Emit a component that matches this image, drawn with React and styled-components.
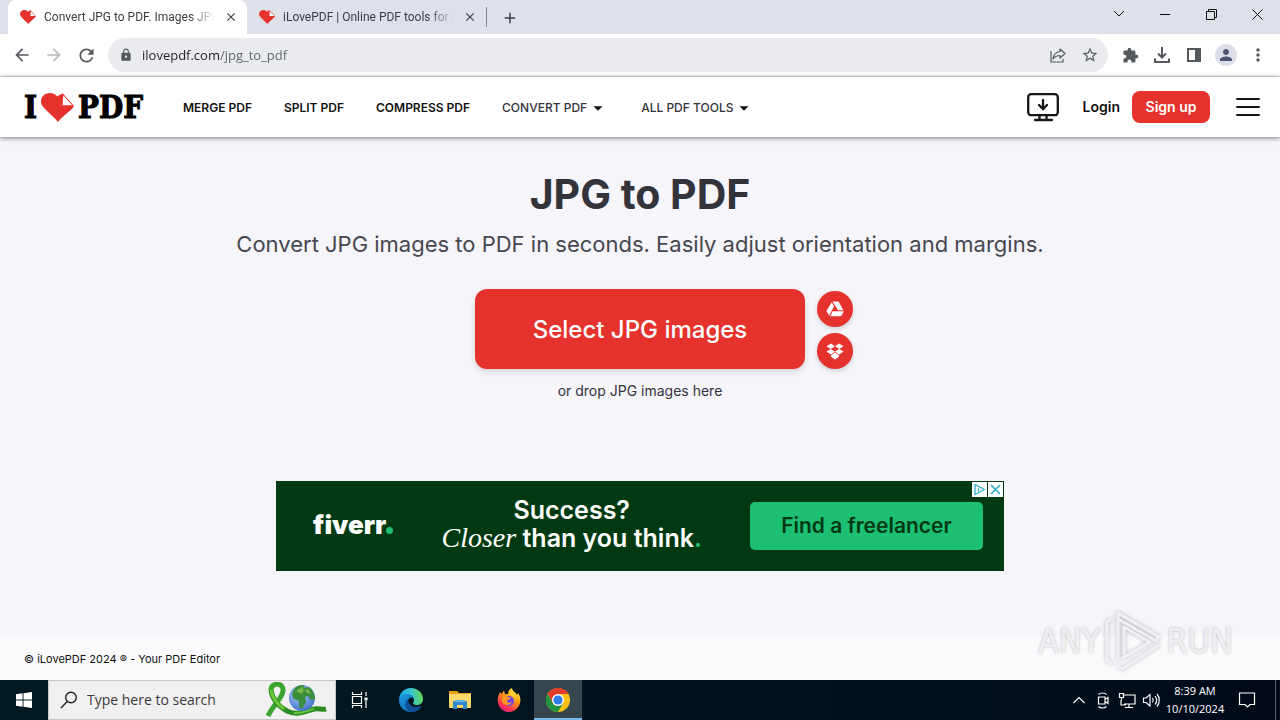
import React, { useState } from 'react';
import styled, { createGlobalStyle } from 'styled-components';
import {
    MdArrowBack,
    MdArrowForward,
    MdRefresh,
    MdLock,
    MdStarOutline,
    MdExtension,
    MdMoreVert,
    MdPerson,
    MdClose,
    MdAdd,
    MdArrowDropDown
} from 'react-icons/md';

const GlobalStyle = createGlobalStyle`
    * {
        box-sizing: border-box;
    }

    body {
        margin: 0;
        font-family: Inter, 'Liberation Sans', sans-serif;
        color: #33333b;
    }

    button, input {
        font: inherit;
        color: inherit;
        border: none;
        background: none;
        padding: 0;
        margin: 0;
        outline: none;
    }

    a {
        color: inherit;
        text-decoration: none;
    }

    svg {
        display: block;
        flex-shrink: 0;
    }
`;

const Desktop = styled.div`
    min-height: 100vh;
    display: flex;
    flex-direction: column;
`;

/* ---------- Browser ---------- */

const TabStrip = styled.div`
    display: flex;
    height: 34px;
    padding-left: 8px;
    background-color: #dee1e8;
    font-family: Roboto, 'Noto Sans', sans-serif;
    font-size: 12px;
    color: #3c4043;
`;

const Tab = styled.div`
    display: flex;
    align-items: center;
    gap: 8px;
    width: 239px;
    padding: 0 8px 0 12px;
    border-radius: 8px 8px 0 0;
    background-color: ${({ $active }) => $active ? '#ffffff' : 'transparent'};
`;

const TabTitle = styled.span`
    flex: 1;
    min-width: 0;
    overflow: hidden;
    white-space: nowrap;
    mask-image: linear-gradient(to right, #000 85%, transparent);
`;

const TabButton = styled.button`
    display: grid;
    place-items: center;
    width: 16px;
    height: 16px;
`;

const TabDivider = styled.div`
    width: 1px;
    height: 20px;
    margin: 7px 14px 0 0;
    background-color: #80868b;
`;

const NewTab = styled(TabButton)`
    align-self: center;
`;

const WindowControls = styled.div`
    display: flex;
    margin-left: auto;
`;

const WindowButton = styled.button`
    display: grid;
    place-items: center;
    width: 46px;
    height: 28px;
    color: #111;
`;

const Toolbar = styled.div`
    display: flex;
    align-items: center;
    height: 43px;
    padding: 0 6px;
    background-color: #ffffff;
    border-bottom: 1px solid #dadce0;
    color: #55585d;
`;

const ToolButton = styled.button`
    display: grid;
    place-items: center;
    width: 32px;
    height: 32px;
    color: ${({ $muted }) => $muted ? '#bababa' : 'inherit'};
`;

const Omnibox = styled.label`
    display: flex;
    align-items: center;
    flex: 1;
    height: 34px;
    margin: 0 6px;
    padding: 0 2px 0 11px;
    border-radius: 17px;
    background-color: #e9ebee;
`;

// The host is drawn darker than the path
const UrlInput = styled.input`
    flex: 1;
    margin-left: 9px;
    font-family: 'Open Sans', 'Noto Sans', sans-serif;
    font-size: 13px;
    line-height: 20px;
    background-image: linear-gradient(to right, #202124 78px, #5f6368 78px);
    background-clip: text;
    -webkit-text-fill-color: transparent;
`;

const Avatar = styled.span`
    display: grid;
    place-items: center;
    width: 22px;
    height: 22px;
    border-radius: 50%;
    background-color: #dcdfe8;
    color: #4d5370;
`;

/* ---------- Site ---------- */

const SiteHeader = styled.header`
    position: relative;
    display: flex;
    align-items: center;
    height: 60px;
    padding: 0 20px 0 24px;
    background-color: #ffffff;
    box-shadow: 0 1px 5px rgba(0, 0, 20, 0.5);
`;

const Logo = styled.a`
    display: flex;
    align-items: center;
    gap: 4px;
    font-family: 'DejaVu Serif Condensed', 'DejaVu Serif', serif;
    font-size: 31px;
    font-weight: 700;
    line-height: 32px;
    color: #000;
    -webkit-text-stroke: 1px #000;
`;

const Nav = styled.nav`
    display: flex;
    align-items: center;
    gap: 32px;
    margin-left: 40px;
    padding-top: 2px;
    font-size: 12px;
    line-height: 16px;
    white-space: nowrap;
`;

const NavLink = styled.a`
    display: flex;
    align-items: center;
    font-weight: ${({ $menu }) => $menu ? 500 : 600};
    color: ${({ $menu }) => $menu ? '#33333b' : '#111'};

    svg {
        color: #111;
    }
`;

const Account = styled.div`
    display: flex;
    align-items: center;
    margin-left: auto;
    font-size: 14px;
    font-weight: 600;
    line-height: 20px;
    color: #111;
`;

const LoginLink = styled.a`
    margin: 0 12px 0 24px;
`;

const SignUp = styled.a`
    width: 78px;
    padding: 6px 0;
    margin-right: 26px;
    border-radius: 8px;
    background-color: #e5322d;
    color: #fff;
    text-align: center;
`;

const Main = styled.main`
    flex: 1;
    display: flex;
    flex-direction: column;
    align-items: center;
    padding-top: 32px;
    background-color: #f5f5fa;
`;

const Title = styled.h1`
    margin: 0;
    font-size: 41px;
    font-weight: 700;
    line-height: 50px;
`;

const Subtitle = styled.p`
    margin: 9px 0 0;
    font-size: 22px;
    line-height: 32px;
    color: #47474f;
`;

const Uploader = styled.div`
    display: grid;
    grid-template-columns: 1fr 330px 1fr;
    align-items: center;
    gap: 12px;
    align-self: stretch;
    margin-top: 29px;
`;

const SelectButton = styled.button`
    grid-column: 2;
    height: 80px;
    border-radius: 12px;
    background-color: #e5322d;
    box-shadow: 0 3px 6px rgba(0, 0, 0, 0.14);
    color: #fff;
    font-size: 24px;
    font-weight: 500;
`;

const Sources = styled.div`
    display: flex;
    flex-direction: column;
    gap: 6px;
    padding-top: 2px;
`;

const SourceButton = styled.button`
    display: grid;
    place-items: center;
    width: 36px;
    height: 36px;
    border-radius: 50%;
    background-color: #e5322d;
    box-shadow: 0 2px 5px rgba(0, 0, 0, 0.16);
    color: #fff;
`;

const DropHint = styled.p`
    margin: 12px 0 0;
    font-size: 14px;
    line-height: 20px;
`;

const Banner = styled.section`
    position: relative;
    display: flex;
    align-items: center;
    justify-content: space-between;
    width: 728px;
    max-width: 100%;
    height: 90px;
    margin: 80px 0 24px;
    padding: 0 21px 0 37px;
    background-color: #003912;
    color: #fff;
`;

const Fiverr = styled.div`
    display: flex;
    align-items: baseline;
    padding-bottom: 2px;
    font-size: 26px;
    font-weight: 900;
    line-height: 32px;
`;

const Dot = styled.span`
    width: 7px;
    height: 7px;
    border-radius: 50%;
    background-color: #1dbf73;
`;

const Slogan = styled.p`
    margin: 0;
    padding-bottom: 4px;
    font-size: 25px;
    font-weight: 600;
    line-height: 28px;
    text-align: center;

    em {
        font-family: 'Liberation Serif', serif;
        font-size: 28px;
        font-weight: 400;
        line-height: 20px;
    }

    span {
        color: #1dbf73;
    }
`;

const BannerLink = styled.a`
    width: 233px;
    border-radius: 5px;
    background-color: #1dbf73;
    color: #003912;
    font-size: 21px;
    font-weight: 600;
    line-height: 48px;
    text-align: center;
`;

const AdMarks = styled.div`
    position: absolute;
    top: 1px;
    right: 1px;
    display: flex;
    gap: 1px;
`;

const AdMark = styled.button`
    display: grid;
    place-items: center;
    width: 15px;
    height: 15px;
    background-color: #fff;
`;

const SiteFooter = styled.footer`
    position: relative;
    padding: 15px 24px 13px;
    background-color: #fbfbfe;
    font-size: 11px;
    line-height: 16px;
    color: #111;
`;

const Watermark = styled.div`
    position: absolute;
    right: 47px;
    bottom: 7px;
    display: flex;
    align-items: center;
    gap: 4px;
    font-family: 'Liberation Sans Narrow', 'DejaVu Sans Condensed', sans-serif;
    font-size: 34px;
    line-height: 64px;
    color: rgba(244, 244, 247, 0.9);
    text-shadow: 0 0 3px rgba(90, 90, 90, 0.4);

    svg {
        filter: drop-shadow(0 0 2px rgba(90, 90, 90, 0.4));
    }
`;

/* ---------- Taskbar ---------- */

const Taskbar = styled.div`
    display: flex;
    height: 40px;
    background-image: linear-gradient(to right, #021a23, #02131e 60%, #020a19);
    color: #fff;
    font-family: 'Open Sans', 'Noto Sans', sans-serif;
`;

const TaskButton = styled.button`
    display: grid;
    place-items: center;
    width: ${({ $width }) => $width || 48}px;
    height: 40px;
    background-color: ${({ $active }) => $active ? '#36464f' : 'transparent'};
    box-shadow: ${({ $active }) => $active ? 'inset 0 -2px #76b9ed' : 'none'};
`;

const SearchBox = styled.label`
    display: flex;
    align-items: center;
    width: 288px;
    padding: 0 8px 0 11px;
    border: 1px solid #c8c8c8;
    background-color: #f0f0f0;
    color: #222;
`;

const SearchInput = styled.input`
    flex: 1;
    min-width: 0;
    margin-left: 9px;
    font-size: 14px;
    line-height: 20px;

    &::placeholder {
        color: #3a3a3a;
        opacity: 1;
    }
`;

const Pinned = styled.div`
    display: flex;
    gap: 1px;
    margin-left: 3px;
`;

const Tray = styled.div`
    display: flex;
    margin-left: auto;
`;

const Clock = styled.div`
    width: 64px;
    padding-top: 2px;
    font-size: 11px;
    line-height: 18px;
    text-align: center;
`;

const ShowDesktop = styled.button`
    width: 5px;
    margin-left: 8px;
    border-left: 1px solid #5a626c;
`;

/* ---------- Drawings ---------- */

const Heart = ({ width, height }) => (
    <svg width={width} height={height} viewBox="0 0 33 29">
        <path
            d="M17 29C14 25 9 21 5 17 1 13 0 11 0 8.500 0 3.500 4 0 9 0c3 0 5.500 1.200 7.500 3.500C18 2 20 1 22 .5L33 13c-1.500 3-5 5.500-8.500 8.500-3 2.500-6 5-7.500 7.500z"
            fill="#e5322d"
        />
        <path d="M22.300 2.200L31.200 12.300H21.500z" fill="#fff" />
    </svg>
);

const DriveIcon = () => (
    <svg width="18" height="16" viewBox="0 0 18 16" fill="currentColor">
        <path d="M5.700 1.200L8 5.200 3.300 14.500 1 11.300c-.6-1-.6-1.400 0-2.400zM6.500.5h5.200c.6 0 1 .3 1.300.8L17.300 9.300h-5.200zM6.700 10.200h10.600c.2.800 0 1.300-.3 1.800l-1.300 2.300c-.4.700-.8.900-1.500.9H4.200z" />
    </svg>
);

const DropboxIcon = () => (
    <svg width="18" height="17" viewBox="0 0 18 17" fill="currentColor">
        <path d="M5 .5l4 2.700-4.300 2.700L.5 3.200zM13 .5l4.500 2.700-4.200 2.700L9 3.200zM.5 8.600l4.200-2.700L9 8.600l-4 2.800zM13.300 5.900l4.200 2.700-4.500 2.800-4-2.800zM5 12.300l4-2.700 4 2.700v1.400l-4 2.800-4-2.800z" />
    </svg>
);

const MonitorIcon = () => (
    <svg width="32" height="30" viewBox="0 0 32 30" fill="none" stroke="#161616" strokeWidth="2.300">
        <rect x="1.200" y="2.200" width="29.600" height="21" rx="3" />
        <path d="M12.500 23v4.500M19.500 23v4.500M8 28h17M16 8v9M12 13l4 4 4-4" strokeLinecap="round" />
    </svg>
);

const ShareIcon = () => (
    <svg width="18" height="16" viewBox="0 0 18 16" fill="none" stroke="currentColor" strokeWidth="1.2">
        <path d="M2 4v11h12v-3" />
        <path d="M11 2l5 4.500-5 4.500V8.500C8 8.500 6 9.500 4 12c.5-4 3-7 7-7.500z" strokeLinejoin="round" />
    </svg>
);

const DownloadIcon = () => (
    <svg width="18" height="18" viewBox="0 0 18 18" fill="none" stroke="currentColor" strokeWidth="2">
        <path d="M9 1v10M5 7.500l4 4 4-4M2 12.500V16h14v-3.500" />
    </svg>
);

const PanelIcon = () => (
    <svg width="14" height="14" viewBox="0 0 14 14" fill="currentColor">
        <path fillRule="evenodd" d="M0 0h14v14H0zM2 2v10h6V2z" />
    </svg>
);

const WindowsIcon = () => (
    <svg width="16" height="16" viewBox="0 0 16 16" fill="#fff">
        <path d="M0 2.200L6.600 1.300V7.600H0zM7.500 1.200L16 0v7.600H7.500zM0 8.400h6.600v6.300L0 13.800zM7.500 8.400H16V16l-8.500-1.200z" />
    </svg>
);

const SearchIcon = () => (
    <svg width="18" height="18" viewBox="0 0 18 18" fill="none" stroke="#222" strokeWidth="1.400">
        <circle cx="11" cy="6.500" r="5.300" />
        <path d="M7.200 10.500L1 17" />
    </svg>
);

const RibbonGlobe = () => (
    <svg width="62" height="36" viewBox="0 0 62 36" fill="none">
        <defs>
            <radialGradient id="sea" cx=".4" cy=".35" r=".7">
                <stop offset="0" stopColor="#a8cdf4" />
                <stop offset="1" stopColor="#426fca" />
            </radialGradient>
        </defs>
        <path d="M6 8c0-8 13-8 12 1-1 8-10 14-15 25" stroke="#39a52c" strokeWidth="5" />
        <path d="M6 8c1 8 7 16 16 21 10 5 20 0 27-2 5-1 8 1 12 0" stroke="#2c8d22" strokeWidth="5" />
        <path d="M6 8c1 7 6 14 13 19" stroke="#6cc83b" strokeWidth="3" />
        <path d="M29 31c8 1 14-3 20-4" stroke="#62c63c" strokeWidth="2" />
        <circle cx="37" cy="16" r="13" fill="url(#sea)" />
        <path d="M28 9c2-4 6-6 10-6l2 3 4-1c4 3 6 8 6 12l-4 1-3-4-3 1 1 5-4 7-3-2v-6l-5-2-2-4z" fill="#3c8e3d" />
        <path d="M31 9l6-4 2 3-3 4zM40 7l4 1 2 4-4-1z" fill="#7cb646" />
    </svg>
);

const TaskViewIcon = () => (
    <svg width="18" height="16" viewBox="0 0 18 16" fill="none" stroke="#fff" strokeWidth="1.200">
        <path d="M1.500 0v2.500h9V0M1.500 16v-2.500h9V16M1.500 4.500h9v7h-9zM15 0v4M15 9v7" />
        <path d="M13.500 5.500h3v3h-3z" fill="#fff" stroke="none" />
    </svg>
);

const EdgeIcon = () => (
    <svg width="24" height="24" viewBox="0 0 24 24">
        <defs>
            <linearGradient id="edgeTop" x1="0" y1=".5" x2="1" y2=".4">
                <stop offset="0" stopColor="#199fdb" />
                <stop offset=".5" stopColor="#35c5d2" />
                <stop offset="1" stopColor="#68d64f" />
            </linearGradient>
            <linearGradient id="edgeLow" x1="0" y1="0" x2="1" y2="1">
                <stop offset="0" stopColor="#1b9de2" />
                <stop offset="1" stopColor="#0b5aa8" />
            </linearGradient>
        </defs>
        <path d="M0 12C0 5 5 0 12 0s12 5 12 11c0 4-3 6-6 6-2 0-4-.5-4-2 0-1 1-1 1-3 0-2-2-4-5-4-5 0-10 3-10 4z" fill="url(#edgeTop)" />
        <path d="M0 12C1 8 5 6 9 6c4 0 6 3 6 5 0-1-3-2-4-1-5 3-2 10 4 11 3 0 5-1 7-3-2 4-6 6-10 6C5 24 0 19 0 12z" fill="url(#edgeLow)" />
        <path d="M9 11c-5 5-2 12 4 13 4 0 7-2 9-5 0-1-1-1-1-1-5 3-12 0-12-7z" fill="#0d4f97" />
    </svg>
);

const ExplorerIcon = () => (
    <svg width="22" height="20" viewBox="0 0 22 20">
        <path d="M0 1h8l2 2h12v5H0z" fill="#e8a317" />
        <path d="M0 4h22v14H0z" fill="#ffd86b" />
        <path d="M4 11h14v8h-4v-4H8v4H4z" fill="#3289cf" />
        <path d="M6 10h10v2H6z" fill="#69b4e8" />
    </svg>
);

const FirefoxIcon = () => (
    <svg width="24" height="24" viewBox="0 0 24 24">
        <defs>
            <linearGradient id="fox" x1=".8" y1="0" x2=".2" y2="1">
                <stop offset="0" stopColor="#fff44f" />
                <stop offset=".4" stopColor="#ff980e" />
                <stop offset=".75" stopColor="#ff3750" />
                <stop offset="1" stopColor="#e31587" />
            </linearGradient>
        </defs>
        <path d="M3 4l1.500 2L7 2.500 8 6h3c0-2 1-5 4-6 0 3 4 4 5 7l1-2c6 8 0 19-9 19C4 24-3 15 3 4z" fill="url(#fox)" />
        <circle cx="12" cy="13" r="5" fill="#7542e5" />
        <path d="M5 8c3-1 4 0 6 1l3 1c-1 2-4 1-4 3s3 2 5 1c-2 4-8 4-10 0z" fill="#ff9820" />
        <path d="M12 7c5 0 7 4 5 8 3-4 2-9-2-11z" fill="#ffcf34" />
    </svg>
);

const ChromeIcon = () => (
    <svg width="24" height="24" viewBox="0 0 24 24">
        <circle cx="12" cy="12" r="12" fill="#fbc116" />
        <path d="M1.600 6A12 12 0 0 1 22.400 6H12L6.800 15z" fill="#e33b2e" />
        <path d="M1.600 6A12 12 0 0 0 12 24L17.200 15 6.800 15z" fill="#229342" />
        <circle cx="12" cy="12" r="6" fill="#fff" />
        <circle cx="12" cy="12" r="4.600" fill="#2f7de9" />
    </svg>
);

const TrayIcon = ({ d, size = 18 }) => (
    <svg width={size} height={size} viewBox="0 0 18 18" fill="none" stroke="#fff" strokeWidth="1.200">
        <path d={d} />
    </svg>
);

const tabs = [
    { title: 'Convert JPG to PDF. Images JPG', active: true },
    { title: 'iLovePDF | Online PDF tools for P', active: false }
];

const navItems = [
    { text: 'MERGE PDF' },
    { text: 'SPLIT PDF' },
    { text: 'COMPRESS PDF' },
    { text: 'CONVERT PDF', menu: true },
    { text: 'ALL PDF TOOLS', menu: true }
];

const trayItems = [
    { name: 'Show hidden icons', d: 'M3.500 12L9 6.500l5.500 5.500' },
    { name: 'Meet now', d: 'M4.500 6h6.500v7H4.500zM11 8.500l3-2v6l-3-2M4.500 3.500c2-2 6-2 8 0M4.500 15.500c2 2 6 2 8 0' },
    { name: 'Network', d: 'M6 4h11v9H6M3 9v5h5M1.500 2.500h4v4h-4zM3.500 6.500V9M11 13v3M7 16.500h8' },
    { name: 'Volume', d: 'M1.500 7v4.500H4L8 15V3.500L4 7zM10.500 7c1 1.500 1 3 0 4.500M13 5c2 2.500 2 6 0 8.500M15 3c3 3.500 3 9 0 12.500' }
];

const BrowserChrome = () => {

    const [url, setUrl] = useState('ilovepdf.com/jpg_to_pdf');

    return (
        <>
            <TabStrip>
                {tabs.map(tab => (
                    <Tab key={tab.title} $active={tab.active}>
                        <Heart width={16} height={14} />
                        <TabTitle>{tab.title}</TabTitle>
                        <TabButton aria-label="Close tab"><MdClose size={14} /></TabButton>
                    </Tab>
                ))}
                <TabDivider />
                <NewTab aria-label="New tab"><MdAdd size={18} /></NewTab>
                <WindowControls>
                    <WindowButton aria-label="Search tabs">
                        <svg width="12" height="8" fill="none" stroke="currentColor"><path d="M1 1l5 5 5-5" /></svg>
                    </WindowButton>
                    <WindowButton aria-label="Minimize">
                        <svg width="10" height="10" fill="none" stroke="currentColor"><path d="M0 5.500h10" /></svg>
                    </WindowButton>
                    <WindowButton aria-label="Restore">
                        <svg width="11" height="11" fill="none" stroke="currentColor"><path d="M.5 2.500h8v8h-8zM2.500 2.500v-2h8v8h-2" /></svg>
                    </WindowButton>
                    <WindowButton aria-label="Close">
                        <svg width="11" height="11" fill="none" stroke="currentColor"><path d="M.5 .5l10 10M10.500 .5l-10 10" /></svg>
                    </WindowButton>
                </WindowControls>
            </TabStrip>

            <Toolbar>
                <ToolButton aria-label="Back"><MdArrowBack size={20} /></ToolButton>
                <ToolButton aria-label="Forward" $muted><MdArrowForward size={20} /></ToolButton>
                <ToolButton aria-label="Reload"><MdRefresh size={21} /></ToolButton>
                <Omnibox>
                    <MdLock size={14} />
                    <UrlInput
                        type="text"
                        aria-label="Address"
                        value={url}
                        onChange={({ target }) => setUrl(target.value)}
                    />
                    <ToolButton aria-label="Share"><ShareIcon /></ToolButton>
                    <ToolButton aria-label="Bookmark"><MdStarOutline size={18} /></ToolButton>
                </Omnibox>
                <ToolButton aria-label="Extensions"><MdExtension size={17} /></ToolButton>
                <ToolButton aria-label="Downloads"><DownloadIcon /></ToolButton>
                <ToolButton aria-label="Side panel"><PanelIcon /></ToolButton>
                <ToolButton aria-label="Profile"><Avatar><MdPerson size={18} /></Avatar></ToolButton>
                <ToolButton aria-label="Menu"><MdMoreVert size={20} /></ToolButton>
            </Toolbar>
        </>
    );
}

const Site = () => (
    <>
        <SiteHeader>
            <Logo href="#">
                <span>I</span>
                <Heart width={33} height={29} />
                <span>PDF</span>
            </Logo>
            <Nav>
                {navItems.map(({ text, menu }) => (
                    <NavLink key={text} href="#" $menu={menu}>
                        {text}
                        {menu && <MdArrowDropDown size={22} />}
                    </NavLink>
                ))}
            </Nav>
            <Account>
                <a href="#" aria-label="Desktop app"><MonitorIcon /></a>
                <LoginLink href="#">Login</LoginLink>
                <SignUp href="#">Sign up</SignUp>
                <button aria-label="Open menu">
                    <svg width="24" height="20" stroke="#161616" strokeWidth="2" strokeLinecap="round">
                        <path d="M1 2h22M1 10h22M1 18h22" />
                    </svg>
                </button>
            </Account>
        </SiteHeader>

        <Main>
            <Title>JPG to PDF</Title>
            <Subtitle>Convert JPG images to PDF in seconds. Easily adjust orientation and margins.</Subtitle>
            <Uploader>
                <SelectButton>Select JPG images</SelectButton>
                <Sources>
                    <SourceButton aria-label="Google Drive"><DriveIcon /></SourceButton>
                    <SourceButton aria-label="Dropbox"><DropboxIcon /></SourceButton>
                </Sources>
            </Uploader>
            <DropHint>or drop JPG images here</DropHint>

            <Banner>
                <Fiverr>fiverr<Dot /></Fiverr>
                <Slogan>
                    Success?<br />
                    <em>Closer</em> than you think<span>.</span>
                </Slogan>
                <BannerLink href="#">Find a freelancer</BannerLink>
                <AdMarks>
                    <AdMark aria-label="About this ad">
                        <svg width="13" height="13" fill="none" stroke="#27afc9" strokeWidth="1.300">
                            <path d="M2 1.500v10l9.500-5zM5.500 5.500v3" strokeLinejoin="round" />
                        </svg>
                    </AdMark>
                    <AdMark aria-label="Close ad">
                        <svg width="11" height="11" stroke="#27afc9" strokeWidth="1.500">
                            <path d="M1 1l9 9M10 1l-9 9" />
                        </svg>
                    </AdMark>
                </AdMarks>
            </Banner>
        </Main>

        <SiteFooter>
            © iLovePDF 2024 ® - Your PDF Editor
            <Watermark>
                <span>ANY</span>
                <svg width="58" height="62" viewBox="0 0 58 62" fill="none" stroke="#f0f0f4" strokeWidth="3" strokeLinejoin="round">
                    <path d="M14 50V3l41 24-3 4L14 9M8 9L3 12v38l5 4M20 45V17l26 15-29 17M13 55l5 4 37-24" />
                </svg>
                <span>RUN</span>
            </Watermark>
        </SiteFooter>
    </>
);

const App = () => (
    <Desktop>
        <GlobalStyle />
        <BrowserChrome />
        <Site />

        <Taskbar>
            <TaskButton aria-label="Start"><WindowsIcon /></TaskButton>
            <SearchBox>
                <SearchIcon />
                <SearchInput type="text" aria-label="Search" placeholder="Type here to search" />
                <RibbonGlobe />
            </SearchBox>
            <TaskButton aria-label="Task view"><TaskViewIcon /></TaskButton>
            <Pinned>
                <TaskButton aria-label="Edge"><EdgeIcon /></TaskButton>
                <TaskButton aria-label="File Explorer"><ExplorerIcon /></TaskButton>
                <TaskButton aria-label="Firefox"><FirefoxIcon /></TaskButton>
                <TaskButton aria-label="Chrome" $active><ChromeIcon /></TaskButton>
            </Pinned>
            <Tray>
                {trayItems.map(({ name, d }) => (
                    <TaskButton key={name} aria-label={name} $width={24}><TrayIcon d={d} /></TaskButton>
                ))}
                <Clock>8:39 AM<br />10/10/2024</Clock>
                <TaskButton aria-label="Notifications" $width={40}>
                    <TrayIcon d="M1.500 2h15v11.500H12L9.500 16 7 13.500H1.500z" />
                </TaskButton>
                <ShowDesktop aria-label="Show desktop" />
            </Tray>
        </Taskbar>
    </Desktop>
);

export default App;
